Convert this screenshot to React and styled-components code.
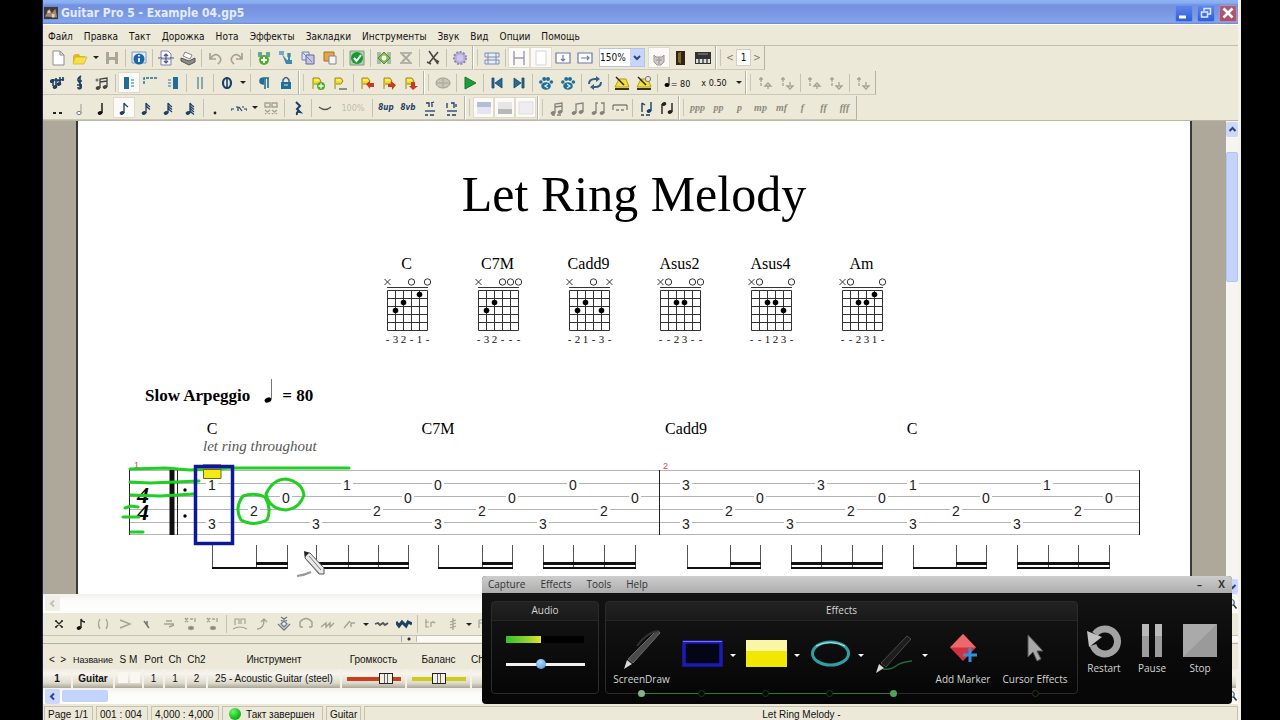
import React from 'react';
import styled, { createGlobalStyle, css } from 'styled-components';

const UI_FONT = '"DejaVu Sans Condensed", "DejaVu Sans", sans-serif';
const SANS = '"Liberation Sans", Arial, sans-serif';
const SERIF = '"Liberation Serif", "Times New Roman", serif';

const GlobalStyle = createGlobalStyle`
  * { box-sizing: border-box; }
  body { margin: 0; background: #000; }
  button, input, select { font: inherit; color: inherit; margin: 0; padding: 0; border: 0; background: none; }
`;

/* ---------- window ---------- */

const Screen = styled.div`
  height: 100vh;
  min-height: 600px;
  padding: 0 39px 0 42px;
  background: #000;
  font-family: ${UI_FONT};
  font-size: 10px;
  color: #111;
`;

const Window = styled.div`
  position: relative;
  display: flex;
  flex-direction: column;
  height: 100%;
  overflow: hidden;
  background: #ece9d8;
  border-left: 1px solid #1c2a55;
  border-right: 3px solid #f4f2ea;
`;

const TitleBar = styled.header`
  flex: none;
  display: flex;
  align-items: center;
  gap: 3px;
  height: 24px;
  padding: 2px 0 0 1px;
  background: linear-gradient(#8db4f3 0, #88adf0 3px, #7490de 5px, #7a98e4 14px, #84a6ee 22px, #6a87cc 24px);
  color: #e4ecfd;
`;

const TitleText = styled.h1`
  flex: 1;
  margin: 0;
  font-size: 12px;
  line-height: 18px;
  font-weight: 700;
`;

const CaptionButton = styled.button`
  display: grid;
  place-items: center;
  width: 18px;
  height: 17px;
  margin-right: 1px;
  border-radius: 2px;
  border: 1px solid ${p => (p.$close ? '#b98fae' : '#6d93ea')};
  background: ${p => (p.$close ? 'linear-gradient(#a85c7c, #b04f63)' : 'linear-gradient(#5c86ec, #2f5fd6)')};
`;

const MenuBar = styled.nav`
  flex: none;
  display: flex;
  align-items: center;
  gap: 11px;
  height: 22px;
  padding: 2px 5px 0;
  border-top: 1px solid #fff;
  border-bottom: 1px solid #c2bfae;
`;

const MenuItem = styled.button`
  white-space: nowrap;
`;

/* ---------- toolbars ---------- */

const Toolbars = styled.div`
  flex: none;
  display: flex;
  flex-direction: column;
  gap: 1px;
  border-bottom: 1px solid #b9b6a6;
`;

const ToolRow = styled.div`
  display: flex;
  height: 24px;
  overflow: hidden;
`;

const ToolGroup = styled.div`
  display: flex;
  align-items: center;
  padding: 0 1px 0 4px;
  border-right: 1px solid #b5b2a2;
  border-bottom: 1px solid #cbc8b8;

  & + & {
    padding-left: 7px;
    border-left: 1px solid #fff;
    background: linear-gradient(#c9c6b6, #c9c6b6) 3px 3px / 1px 17px no-repeat;
  }

  ${p => p.$tight && css`
    button { width: 21px; }
  `}
`;

const ToolButton = styled.button`
  display: grid;
  place-items: center;
  flex: none;
  width: ${p => p.$width || 22}px;
  height: 21px;
  white-space: nowrap;
  ${p => p.$on && css`
    background: #fbfaf6;
    border: 1px solid #dedbcd;
  `}
  ${p => p.$dim && css`
    opacity: 0.55;
    filter: grayscale(1);
  `}
`;

const Separator = styled.span`
  flex: none;
  width: 1px;
  height: 18px;
  margin: 0 2px;
  background: #c4c1b0;
`;

const Caret = styled.span`
  flex: none;
  width: 0;
  margin: 0 ${p => p.$gap || 2}px;
  border: solid transparent;
  border-width: 3px 3px 0;
  border-top-color: ${p => p.$color || '#222'};
`;

const ZoomBox = styled.label`
  display: flex;
  align-items: center;
  height: 19px;
  margin: 0 3px;
  background: #fff;
  border: 1px solid #b7c5dc;
`;

const ZoomSelect = styled.select`
  width: 30px;
  appearance: none;
  font-size: 10px;
`;

const ZoomArrow = styled.span`
  display: grid;
  place-items: center;
  width: 14px;
  height: 17px;
  background: #c5d5fb;
`;

const PageInput = styled.input`
  width: 15px;
  height: 17px;
  background: #fff;
  border: 1px solid #d2cfc0;
  text-align: center;
`;

const Dynamic = styled.i`
  font-family: ${SERIF};
  font-size: 10px;
  font-weight: 700;
  color: #8d8b80;
`;

const Tiny = styled.span`
  font-size: ${p => p.$size || 8}px;
  font-style: ${p => (p.$italic ? 'italic' : 'normal')};
  font-weight: ${p => (p.$bold ? 700 : 400)};
  color: ${p => p.$color || '#111'};
`;

const NAVY = '#1d3f63';
const TEAL = '#1f6f98';
const GREY = '#a5a294';

const noteHead = (x, y, c = '#111') => <ellipse cx={x} cy={y} rx="2.4" ry="1.8" fill={c} transform={`rotate(-20 ${x} ${y})`} />;
const flagged = n => (
  <>
    {noteHead(6, 13, NAVY)}
    <path d={`M8 13V3${Array.from({ length: n }, (_, i) => `M8 ${3 + i * 2.5}q1 2 4 4`).join('')}`} stroke={NAVY} strokeWidth="1.3" fill="none" />
  </>
);
const flag = (
  <>
    <path d="M3 14V3h6l2 3-2 3H4" fill="#f2dc32" stroke="#9c8a16" />
    <path d="M4 5h5" stroke="#fff7a8" />
  </>
);
const stacked = up => (
  <g fill="none" stroke={GREY} strokeWidth="1.3">
    <path d="M4 2v5M2 4h4M4 8v3" />
    <path d={up ? 'M11 14v-3M8 11l3-3 3 3z' : 'M11 7v3M8 11l3 3 3-3z'} />
  </g>
);
const beamed = (c, beams = 1) => (
  <>
    {noteHead(4, 13, c)}
    {noteHead(11, 12, c)}
    <path d={`M6 13V4l7-1v9${beams > 1 ? 'M6 7l7-1' : ''}`} stroke={c} strokeWidth="1.3" fill="none" />
  </>
);
const foot = c => <path d="M3 15h3M8 15h4" stroke={c} strokeWidth="1.5" />;
const paw = toe => (
  <g fill={TEAL}>
    <ellipse cx="8" cy="11" rx="4.8" ry="3.8" />
    <circle cx="2.8" cy="7" r="1.8" />
    <circle cx="6.2" cy="4" r="2" />
    <circle cx="10" cy="4" r="2" />
    <circle cx="13.4" cy="7" r="1.8" />
    <path d={toe} stroke="#e4eef4" strokeWidth="1.3" fill="none" />
  </g>
);
const metronome = (
  <>
    <path d="M1 13h14v2H1z" fill="#3a3410" />
    <path d="M5 4L1 12h14l-3-8z" fill="#f3de3a" stroke="#b09c1c" />
    <path d="M2 2l8 8" stroke="#222" strokeWidth="1.5" />
  </>
);

const ICONS = {
  logo: <><path d="M0 1h16v14H0z" fill="#3d3a3c" /><path d="M1 12L6 3l3 5 4-5 2 10z" fill="#a08a70" /><path d="M4 5h3v3H4zM9 9h3v4H9z" fill="#e2d3b8" /></>,
  'new': <path d="M3 1h7l4 4v10H3zM10 1v4h4" fill="#fff" stroke="#8c8c94" />,
  open: <><path d="M1 6l2-2h4l1 2h5v7H1z" fill="#e0bb22" /><path d="M3 7h12l-3 7H1z" fill="#f7e04e" stroke="#cbaa1c" strokeWidth=".6" /></>,
  save: <><path d="M2 2h12v12H2z" fill="#a9a699" /><path d="M5 2h6v5H5zM5 10h6v4H5z" fill="#ece9d8" /></>,
  info: <><path d="M1 2h14v11H1z" fill="#e7eef8" stroke="#7d99bd" /><circle cx="8" cy="9" r="5.5" fill="#1766ae" /><path d="M8 5v1.5M8 8v4" stroke="#fff" strokeWidth="1.8" /></>,
  setup: <><path d="M3 1h7l3 3v4H3zM3 9h10v6H3z" fill="#f8f8ff" stroke="#7c81a8" /><path d="M0 8h4M12 8h4M8 4v8M6 6l2-2 2 2M6 11l2 2 2-2" stroke="#4d5590" fill="none" strokeWidth="1.2" /></>,
  print: <><path d="M5 2l7 3-2 4-7-3z" fill="#fff" stroke="#888" /><path d="M1 8l8 3 6-3v4l-6 3-8-4z" fill="#8b8b8b" stroke="#555" /></>,
  undo: <path d="M3 3v6h6M3 9q5-7 9-3t-1 8" fill="none" stroke={GREY} strokeWidth="1.7" />,
  redo: <path d="M13 3v6H7M13 9Q8 2 4 6t1 8" fill="none" stroke={GREY} strokeWidth="1.7" />,
  addTrack: <><path d="M2 2h4v5H2zM10 2h4v5h-4z" fill="#6fa39a" /><circle cx="8" cy="10" r="5" fill="#4fae2c" /><path d="M8 7v6M5 10h6" stroke="#fff" strokeWidth="2" /></>,
  tracks: <><path d="M1 1h5v4H1zM9 3h4v4H9z" fill="#74a9bf" /><path d="M4 4l5 6h5v4H8z" fill="#3f87ad" /><path d="M11 3v7" stroke="#3f87ad" strokeWidth="2" /></>,
  trackProps: <><path d="M2 2h7v8H2z" fill="#d9e1f5" stroke="#6c82b2" /><path d="M6 5h8v9H6z" fill="#c6c4e4" stroke="#67659a" /><path d="M3 3l9 9" stroke="#7580b0" /></>,
  pasteTrack: <><path d="M2 2h10v9H2z" fill="#e2a64c" stroke="#a66f21" /><path d="M7 6h7v8H7z" fill="#f3f3f8" stroke="#888" /></>,
  check: <><path d="M1 1h14v14H1z" fill="#b8cdb6" stroke="#7d9a88" /><circle cx="8" cy="8" r="6" fill="#189a32" /><path d="M5 8l2.5 3L12 5" stroke="#fff" strokeWidth="2" fill="none" /></>,
  addBar: <><path d="M1 2h4v12H1zM11 2h4v12h-4z" fill="#a7b8b0" /><path d="M8 2l6 6-6 6-6-6z" fill="#8cbf4a" stroke="#4f8730" /><circle cx="8" cy="8" r="2.4" fill="#fff" /></>,
  delBar: <><path d="M2 3h12M2 13h12" stroke="#8a897f" strokeWidth="2" /><path d="M4 4l8 8M12 4l-8 8" stroke="#77766c" strokeWidth="2" /></>,
  tuner: <path d="M4 1l9 13M13 2L4 13M2 12l4 2M9 9l5 3" stroke="#4a4a42" strokeWidth="1.6" fill="none" />,
  gear: <><circle cx="8" cy="8" r="6" fill="#b9aed8" stroke="#8f86b5" strokeDasharray="2 1.4" strokeWidth="2" /><circle cx="8" cy="8" r="3.4" fill="#cdc6ea" /></>,
  multitrack: <path d="M1 3h14v4H1zM1 10h14v4H1zM4 3v11M12 3v11" fill="#e9effa" stroke="#7b8eb2" />,
  pageMode: <path d="M3 1v14M13 1v14M3 8h10" stroke="#9a9ab0" fill="none" strokeWidth="1.4" />,
  parchment: <path d="M3 1h10v14H3z" fill="#fff" stroke="#d4d4dd" />,
  screenV: <path d="M1 3h14v10H1zM8 5v6M6 9l2 2 2-2" fill="#fff" stroke="#6c78a8" strokeWidth="1.2" />,
  screenH: <path d="M1 3h14v10H1zM4 8h8M10 6l2 2-2 2" fill="#fff" stroke="#6c78a8" strokeWidth="1.2" />,
  fretboard: <path d="M3 5l2 2h6l2-2v7l-3 3H6l-3-3zM5 10h6M8 7v7" fill="#cfc9ca" stroke="#9d9496" />,
  guitar: <><path d="M3 1h9v14H3z" fill="#33240f" /><path d="M5 3l3-1v12l-3-2z" fill="#84672a" /></>,
  keys: <><path d="M0 2h16v12H0z" fill="#30332f" /><path d="M1 9h14v4H1z" fill="#dfe2dc" /><path d="M4 8v5M8 8v5M12 8v5" stroke="#30332f" strokeWidth="1.3" /><path d="M3 4h10" stroke="#8d958c" /></>,
  voices: <><path d="M3 4v7M6 3v8M3 5h6M10 2v7M7 6l7-2M13 2v4" stroke={NAVY} strokeWidth="1.6" fill="none" />{noteHead(2, 6, NAVY)}{noteHead(5, 12, NAVY)}{noteHead(9, 9, NAVY)}</>,
  clef: <path d="M9 1Q4 4 7 7t2 6q-3 2-3-1M8 2v12M6 6h4M5 10h5" stroke={NAVY} strokeWidth="1.6" fill="none" />,
  triplet: <>{beamed('#444', 2)}<circle cx="3" cy="5" r="1.5" fill="#777" /></>,
  barLeft: <><path d="M3 2h5v12H3z" fill={TEAL} /><path d="M10 5h3M10 8h3M10 11h3" stroke="#6aa3bf" strokeWidth="1.6" /></>,
  barTop: <path d="M1 9V3h14" stroke={TEAL} strokeWidth="1.4" strokeDasharray="3 1" fill="none" />,
  barRight: <><path d="M8 2h5v12H8z" fill={TEAL} /><path d="M3 5h3M3 8h3M3 11h3" stroke="#6aa3bf" strokeWidth="1.6" /></>,
  doubleBar: <path d="M6 2v12M10 2v12" stroke="#85a8a8" strokeWidth="2" />,
  coda: <><ellipse cx="8" cy="8" rx="4" ry="5" fill="#e8eef2" stroke={NAVY} strokeWidth="2.2" /><path d="M8 2v12" stroke={NAVY} strokeWidth="1.6" /></>,
  pilcrow: <path d="M7 3h6M9 3v11M12 3v10M8 3q-4 0-4 3t4 3" stroke={TEAL} strokeWidth="1.6" fill={TEAL} />,
  lock: <><path d="M5 7V5q3-5 6 0v2" stroke="#3a6488" fill="none" strokeWidth="1.5" /><path d="M3 7h10v7H3z" fill={TEAL} /><path d="M6 10h4" stroke="#d5e8f2" /></>,
  marker: <>{flag}<circle cx="11" cy="11" r="4" fill="#4faa2e" /><path d="M11 8.5v5M8.5 11h5" stroke="#fff" strokeWidth="1.3" /></>,
  markerList: <>{flag}<path d="M7 14h8" stroke="#777" strokeWidth="1.6" /></>,
  markerFirst: <>{flag}<path d="M7 9l4-3v2h4v4h-4v2z" fill="#c93a22" /></>,
  markerPrev: <>{flag}<path d="M7 9h3V6l5 4-4 5v-3H7z" fill="#c93a22" /></>,
  markerNext: <>{flag}<path d="M8 7h4v4h3l-5 4-4-4h2z" fill="#c93a22" /></>,
  rse: <><ellipse cx="8" cy="8" rx="7" ry="5" fill="#c9c6b9" stroke="#9e9b8e" /><path d="M2 8h12M8 4v8" stroke="#a9a699" /></>,
  play: <path d="M3 2l11 6-11 6z" fill="#1f9a3a" stroke="#157a2a" />,
  first: <path d="M3 3h2v10H3zM13 3v10L6 8z" fill={TEAL} stroke={NAVY} strokeWidth=".8" />,
  last: <path d="M11 3h2v10h-2zM3 3v10l7-5z" fill={TEAL} stroke={NAVY} strokeWidth=".8" />,
  paw: paw('M10 9l-3 2 3 2'),
  pawNext: paw('M7 9l3 2-3 2'),
  loop: <><path d="M2 9q0-5 6-5h2M14 7q0 5-6 5H6" fill="none" stroke="#345f86" strokeWidth="2" /><path d="M9 1l4 3-4 3zM7 9l-4 3 4 3z" fill="#345f86" /></>,
  metronome,
  metronomeCount: <>{metronome}<circle cx="12" cy="4" r="2.6" fill="#e6e6e6" stroke="#777" /></>,
  quarter: <>{noteHead(6, 13)}<path d="M8 13V3" stroke="#111" strokeWidth="1.4" /></>,
  whole: <path d="M3 12h3v2H3zM9 12h3v2H9z" fill="#222" />,
  half: <><ellipse cx="7" cy="13" rx="2.2" ry="1.6" fill="#fff" stroke="#777" /><path d="M9 13V4" stroke="#999" /></>,
  eighth: flagged(1),
  sixteenth: flagged(2),
  thirtysecond: flagged(3),
  sixtyfourth: flagged(4),
  dot: <circle cx="6" cy="13" r="1.4" fill="#222" />,
  tuplet: <><path d="M0 9h3M13 9h3M0 9v2M16 9v2" stroke={NAVY} /><path d="M5 7h2v4M8 7l3 4M11 7h2" stroke={NAVY} strokeWidth="1.2" fill="none" /></>,
  tupletFree: <path d="M2 3h5v4H2zM9 3h5v4H9zM2 10l5 4M9 10l5 4M7 10l-5 4M14 10l-5 4" stroke={GREY} strokeWidth="1.4" fill="none" />,
  rest: <path d="M6 2l4 4-3 3 3 3q-4-1-3 3" stroke={NAVY} strokeWidth="2" fill="none" />,
  tie: <path d="M2 7q6 5 12 0" stroke="#555" strokeWidth="1.3" fill="none" />,
  trUp: <g stroke={NAVY} fill="none" strokeWidth="1.3"><path d="M4 3h3v4M10 2v5M9 3l3-1" />{foot(NAVY)}<path d="M3 11h10" /></g>,
  trDown: <g stroke={NAVY} fill="none" strokeWidth="1.3"><path d="M3 3v5M7 3h3v5M12 4v3" />{foot(NAVY)}<path d="M3 11h10" /></g>,
  voiceHigh: <><path d="M1 2h14v12H1z" fill="#e3e6f0" /><path d="M1 2h14v5H1z" fill="#b4bdd6" /></>,
  voiceLow: <><path d="M1 2h14v12H1z" fill="#e6e6e6" /><path d="M1 9h14v5H1z" fill="#b8b8b8" /></>,
  voiceBoth: <path d="M1 2h14v12H1z" fill="#eeedf0" stroke="#ddd" />,
  beamAuto: <>{beamed('#85837a', 2)}{foot('#85837a')}</>,
  beam: beamed('#85837a'),
  beamBreak: <>{noteHead(3, 13, '#85837a')}{noteHead(11, 13, '#85837a')}<path d="M5 13V3h2M13 13V3h-3" stroke="#85837a" strokeWidth="1.3" fill="none" /></>,
  beamRest: <path d="M1 5h14M1 5v5M15 5v5M4 10h3M9 10h3" stroke="#85837a" strokeWidth="1.4" fill="none" />,
  stemAuto: <>{noteHead(11, 11, NAVY)}<path d="M4 3v9M13 11V2M4 3l3 2" stroke={NAVY} strokeWidth="1.4" />{foot(NAVY)}</>,
  stem: <>{noteHead(11, 12, '#222')}{noteHead(5, 4, '#222')}<path d="M3 4v10M13 12V3" stroke="#222" strokeWidth="1.4" /></>,
  sharpUp: stacked(true),
  flatDown: stacked(false),
  dead: <path d="M5 5l6 6M11 5l-6 6M4 5h2M10 5h2M4 11h2M10 11h2" stroke="#222" strokeWidth="1.4" />,
  grace: <>{noteHead(6, 12)}<path d="M8 12V3q1 3 4 3" stroke="#222" strokeWidth="1.4" fill="none" /></>,
  ghost: <path d="M5 3Q2 8 5 13M11 3q3 5 0 10" stroke={GREY} strokeWidth="1.3" fill="none" />,
  accent: <path d="M3 4l10 4-10 4" stroke={GREY} strokeWidth="1.4" fill="none" />,
  staccato: <path d="M5 5l5 7M8 5v4" stroke="#777" strokeWidth="1.6" />,
  ringing: <path d="M3 8h10M5 5h6M8 11l5-2" stroke={GREY} strokeWidth="1.4" />,
  tremBar: <g stroke={GREY} strokeWidth="1.3" fill="none"><path d="M2 2l3 4M5 2L2 6M7 3h3M12 2v4" /><ellipse cx="8" cy="12" rx="2.5" ry="1.5" fill="#777" /></g>,
  pm: <path d="M3 9V3h4v5M9 8V3h4v5M1 13q7-4 14 0" stroke={GREY} strokeWidth="1.2" fill="none" />,
  bend: <path d="M3 13q7 0 7-9M7 6l3-3 3 3" stroke={GREY} strokeWidth="1.4" fill="none" />,
  harmonic: <path d="M2 8l6 6 6-6M5 8l3-3 3 3-3 3zM5 1l6 4M11 1L5 5" stroke="#6b7785" strokeWidth="1.3" fill="#f7f7f7" />,
  hammer: <path d="M2 11V6q6-7 12 0v5M2 11h3M11 11h3" stroke={GREY} strokeWidth="1.4" fill="none" />,
  slide: <path d="M1 11l5-4v4l4-4v4l4-4" stroke={GREY} strokeWidth="1.4" fill="none" />,
  shift: <path d="M2 12l6-7M9 11V7h4" stroke={GREY} strokeWidth="1.4" fill="none" />,
  vibrato: <path d="M1 8l3-1 2 2 3-2 2 2 3-2" stroke="#555" strokeWidth="1.8" fill="none" />,
  vibratoWide: <path d="M0 6l3 4 3-4 4 4 2-4 4 2" stroke={NAVY} strokeWidth="3" fill="none" />,
  trill: <path d="M3 3v8h3M2 6h4M8 6v5M8 7q2-2 4 0" stroke={GREY} strokeWidth="1.2" fill="none" />,
  tremolo: <path d="M8 2v12M5 6l6-2M5 9l6-2M5 12l6-2" stroke={GREY} strokeWidth="1.3" />,
  tail: <path d="M2 4v8M2 4h4v3H2M9 4h4l-3 3 3 2-4 3" stroke={GREY} strokeWidth="1.2" fill="none" />,
  search: <><circle cx="7" cy="6" r="4" fill="#e8f0f4" stroke="#56707c" strokeWidth="1.6" /><path d="M10 9l4 5" stroke="#333" strokeWidth="2" /></>,
};

const Icon = ({ name, size = 16 }) => (
  <svg width={size} height={size} viewBox="0 0 16 16" fill="none" aria-hidden="true">
    {ICONS[name]}
  </svg>
);

// prefix "*" = pressed, "~" = disabled, "|" = separator, "v" = drop-down arrow
const renderTool = (item, i) => {
  if (typeof item !== 'string') return React.cloneElement(item, { key: i });
  if (item === '|') return <Separator key={i} />;
  if (item === 'v') return <Caret key={i} />;
  const name = item.replace(/^[*~]/, '');
  return (
    <ToolButton key={i} aria-label={name} $on={item[0] === '*'} $dim={item[0] === '~'}>
      <Icon name={name} />
    </ToolButton>
  );
};

const dynamics = ['ppp', 'pp', 'p', 'mp', 'mf', 'f', 'ff', 'fff'].map(d => (
  <ToolButton><Dynamic>{d}</Dynamic></ToolButton>
));

const TOOL_ROWS = [
  [
    ['new', 'open', 'v', 'save', '|', 'info', '|', 'setup', 'print', '|', 'undo', 'redo', '|',
      'addTrack', 'tracks', 'trackProps', 'pasteTrack', '|', 'check', '|', 'addBar', '~delBar', '|', 'tuner', '|', 'gear'],
    ['multitrack', '|', '*pageMode', '*parchment', 'screenV', 'screenH',
      <ZoomBox>
        <ZoomSelect aria-label="Zoom" defaultValue="150%"><option>150%</option></ZoomSelect>
        <ZoomArrow>
          <svg width="8" height="6" viewBox="0 0 8 6"><path d="M1 1l3 3 3-3" fill="none" stroke="#2c4680" strokeWidth="2" /></svg>
        </ZoomArrow>
      </ZoomBox>,
      '*fretboard', 'guitar', 'keys'],
    [
      <ToolButton $width={12} $dim>&lt;</ToolButton>,
      <PageInput aria-label="Page" defaultValue="1" />,
      <ToolButton $width={12} $dim>&gt;</ToolButton>,
    ],
  ],
  [
    ['voices', 'clef', 'triplet', '|', '*barLeft', 'barTop', 'barRight', '|', 'doubleBar', '|', 'coda', 'v', '|', 'pilcrow', 'lock'],
    ['marker', 'markerList', '|', 'markerFirst', 'markerPrev', 'markerNext'],
    ['rse', '|', 'play', '|', 'first', 'last', '|', 'paw', 'pawNext', '|', 'loop', '|', 'metronome', 'metronomeCount', '|',
      <ToolButton $width={34}>
        <span>
          <svg width="7" height="10" viewBox="0 0 7 10"><ellipse cx="3" cy="8" rx="2.500" ry="2" /><path d="M5 8V0" stroke="#111" /></svg>
          <Tiny $size={9}>= 80</Tiny>
        </span>
      </ToolButton>,
      <ToolButton $width={40}><Tiny $size={9}>x 0.50</Tiny></ToolButton>,
      'v'],
    ['sharpUp', 'flatDown', '|', 'sharpUp', 'flatDown', '|', 'flatDown'],
  ],
  [
    ['whole', 'half', 'quarter', '*eighth', 'sixteenth', 'thirtysecond', 'sixtyfourth', '|', 'dot', 'tuplet', 'v', 'tupletFree', '|',
      'rest', '|', 'tie',
      <ToolButton $width={34}><Tiny $size={9} $color="#c0bdae">100%</Tiny></ToolButton>,
      '|',
      <ToolButton><Tiny $italic $bold $color={NAVY}>8up</Tiny></ToolButton>,
      <ToolButton><Tiny $italic $bold $color={NAVY}>8vb</Tiny></ToolButton>,
      'trUp', 'trDown'],
    ['*voiceHigh', '*voiceLow', '*voiceBoth'],
    ['beamAuto', 'beam', 'beamBreak', 'beamRest', '|', 'stemAuto', 'stem'],
    dynamics,
  ],
];

const MENU = ['Файл', 'Правка', 'Такт', 'Дорожка', 'Нота', 'Эффекты', 'Закладки', 'Инструменты', 'Звук', 'Вид', 'Опции', 'Помощь'];

/* ---------- score ---------- */

const Workspace = styled.main`
  flex: 1;
  min-height: 0;
  display: flex;
`;

const Desk = styled.div`
  flex: 1;
  display: flex;
  padding: 0 34px 0 33px;
  overflow: hidden;
  background: #ada899;
`;

const Sheet = styled.article`
  flex: 1;
  display: flex;
  flex-direction: column;
  padding-top: 44px;
  background: #fff;
  border: solid #3c3a36;
  border-width: 0 2px;
  color: #000;
  font-family: ${SERIF};

  > * { flex-shrink: 0; }
`;

const SongTitle = styled.h2`
  margin: 0 0 32px;
  font-size: 50px;
  line-height: 58px;
  font-weight: 400;
  text-align: center;
`;

const ChordRow = styled.div`
  display: flex;
  justify-content: center;
`;

const Chord = styled.figure`
  width: 91px;
  margin: 0;
  display: flex;
  flex-direction: column;
  align-items: center;
`;

const ChordName = styled.figcaption`
  font-size: 16px;
  line-height: 18px;
`;

const Tempo = styled.div`
  display: flex;
  align-items: center;
  height: 25px;
  margin: 33px 0 0 67px;
  font-size: 17px;
  line-height: 25px;
  font-weight: 700;
`;

const TempoNote = styled.svg`
  margin: 0 8px 9px 14px;
`;

const Staff = styled.svg`
  display: block;
  width: 100%;
`;

const CHORDS = [
  { name: 'C', marks: 'x  o o', fingers: '-32-1-', dots: [[1, 3], [2, 2], [4, 1]] },
  { name: 'C7M', marks: 'x  ooo', fingers: '-32---', dots: [[1, 3], [2, 2]] },
  { name: 'Cadd9', marks: 'x  o x', fingers: '-21-3-', dots: [[1, 3], [2, 2], [4, 3]] },
  { name: 'Asus2', marks: 'xo  oo', fingers: '--23--', dots: [[2, 2], [3, 2]] },
  { name: 'Asus4', marks: 'xo   o', fingers: '--123-', dots: [[2, 2], [3, 2], [4, 3]] },
  { name: 'Am', marks: 'xo   o', fingers: '--231-', dots: [[2, 2], [3, 2], [4, 1]] },
];

const ChordDiagram = ({ marks, fingers, dots }) => {
  const sx = i => 6.5 + i * 8;
  return (
    <svg width="51" height="77" viewBox="0 0 51 77">
      <path d="M6 14.5h41" stroke="#333" />
      {[0, 1, 2, 3, 4, 5].map(i => (
        <path key={i} d={`M${sx(i)} 17.5v40M6.5 ${17.5 + i * 8}h40`} stroke="#333" />
      ))}
      {[...marks].map((m, i) => (
        <React.Fragment key={i}>
          {m === 'x' && <path d={`M${sx(i) - 3} 6l6 6m0-6l-6 6`} stroke="#333" />}
          {m === 'o' && <circle cx={sx(i)} cy="9" r="3.2" fill="none" stroke="#333" />}
        </React.Fragment>
      ))}
      {dots.map(([s, f]) => <circle key={s} cx={sx(s)} cy={13.5 + f * 8} r="2.8" />)}
      {[...fingers].map((f, i) => (
        <text key={i} x={sx(i)} y="70" fontSize="11" textAnchor="middle" fill="#111">{f}</text>
      ))}
    </svg>
  );
};

const LINES = [469.5, 482.5, 495.5, 508.5, 521.5, 533.5];

// [x, line, fret]
const NOTES = [
  [212, 1, 1], [212, 4, 3], [254, 3, 2], [286, 2, 0], [316, 4, 3], [347, 1, 1], [377, 3, 2], [408, 2, 0],
  [438, 1, 0], [438, 4, 3], [482, 3, 2], [512, 2, 0], [543, 4, 3], [573, 1, 0], [604, 3, 2], [635, 2, 0],
  [686, 1, 3], [686, 4, 3], [729, 3, 2], [760, 2, 0], [790, 4, 3], [821, 1, 3], [851, 3, 2], [882, 2, 0],
  [913, 1, 1], [913, 4, 3], [956, 3, 2], [986, 2, 0], [1017, 4, 3], [1047, 1, 1], [1078, 3, 2], [1109, 2, 0],
];

// stems of one beam, then the index where the second beam starts
const BEAMS = [
  [[212, 256, 287], 1], [[316, 348, 378, 408], 0],
  [[438, 482, 512], 1], [[543, 573, 604, 635], 0],
  [[687, 730, 760], 1], [[791, 821, 852, 882], 0],
  [[913, 956, 986], 1], [[1017, 1048, 1078, 1109], 0],
];

const LABELS = [[212, 'C'], [438, 'C7M'], [686, 'Cadd9'], [912, 'C']];

const PEN_STROKES = [
  'M130 468L165 467L190 469L232 467L349 467',
  'M130 481L150 482L199 480',
  'M131 494L160 495L194 493',
  'M125 507l6-2 7 1',
  'M123 516h16',
  'M131 531h12',
  'M243 495Q254 491 265 496Q272 508 267 519Q253 526 241 519Q234 507 243 495',
  'M266 493Q273 478 286 478Q302 481 304 494Q299 508 286 509Q269 508 266 493',
];

const Tablature = () => (
  <Staff viewBox="78 407 1112 187" role="img" aria-label="Tablature">
    {LINES.map(y => <path key={y} d={`M129 ${y}H1140`} stroke="#b4b4b4" />)}
    <path d="M129.5 469v65M659.5 469v65M1139.5 469v65M177.5 469v65" stroke="#222" />
    <path d="M172 469v65" stroke="#111" strokeWidth="5" />
    <circle cx="185" cy="489" r="1.7" />
    <circle cx="185" cy="515" r="1.7" />
    <g fontFamily={SERIF} fontSize="24" fontWeight="700" fontStyle="italic" textAnchor="middle">
      <text x="143" y="502">4</text>
      <text x="143" y="519">4</text>
    </g>
    <g fontFamily={SERIF} fontSize="16" textAnchor="middle">
      {LABELS.map(([x, t]) => <text key={x} x={x} y="433">{t}</text>)}
    </g>
    <text x="203" y="450" fontFamily={SERIF} fontSize="15" fontStyle="italic" fill="#555">let ring throughout</text>
    <g fontFamily={SANS} fontSize="9" fill="#e0405a">
      <text x="134" y="467">1</text>
      <text x="663" y="468">2</text>
    </g>
    {NOTES.map(([x, line, fret]) => (
      <g key={`${x}-${line}`}>
        <rect x={x - 6} y={LINES[line] - 5} width="12" height="12" fill="#fff" />
        <text x={x} y={LINES[line] + 6} fontFamily={SANS} fontSize="14" textAnchor="middle" fill="#222">{fret}</text>
      </g>
    ))}
    {BEAMS.map(([stems, second]) => {
      const last = stems[stems.length - 1];
      return (
        <g key={stems[0]} stroke="#111">
          {stems.map(x => <path key={x} d={`M${x + 0.5} 544v23`} stroke="#555" />)}
          <path d={`M${stems[0]} 567H${last + 1}`} strokeWidth="2" />
          <path d={`M${stems[second]} 562.5H${last + 1}`} strokeWidth="3" />
        </g>
      );
    })}
    {PEN_STROKES.map(d => (
      <path key={d} d={d} fill="none" stroke="#1fcf22" strokeWidth="3" strokeLinecap="round" strokeLinejoin="round" />
    ))}
    <path d="M203 463h18v5h-18z" fill="#88889c" />
    <path d="M203.500 468.500h17.500v9h-17.500z" fill="#f3ea12" stroke="#6e6a1c" />
    <rect x="195.500" y="465.500" width="37" height="77" fill="none" stroke="#0c1896" strokeWidth="3.500" />
    <path d="M297 575q8-1 14-4" stroke="#999" strokeWidth="2" fill="none" />
    <path d="M305 551l5 1 14 15 0 6-5 0-14-16z" fill="#e9e9e9" stroke="#555" />
    <path d="M309 555l12 14M306 558l13 14" stroke="#777" />
    <path d="M304 550l5 2-4 4z" fill="#222" />
  </Staff>
);

const ScrollColumn = styled.div`
  flex: none;
  width: 12px;
  display: flex;
  flex-direction: column;
  justify-content: space-between;
  padding-top: 1px;
  background: #f6f5f2;
`;

const ScrollButton = styled.button`
  display: grid;
  place-items: center;
  width: ${p => (p.$wide ? 15 : 12)}px;
  height: 15px;
  border-radius: 2px;
  background: ${p => (p.$off ? '#f0efe8' : '#c9d8fb')};
  color: ${p => (p.$off ? '#c5c2b4' : '#2c4680')};
`;

const ScrollThumb = styled.div`
  height: 130px;
  margin: 15px 0 auto;
  border: 1px solid #b1c3f2;
  border-radius: 2px;
  background: #c3d3fb;
`;

const Chevron = ({ turn }) => (
  <svg width="9" height="9" viewBox="0 0 9 9" aria-hidden="true">
    <path d="M1.500 6l3-3 3 3" fill="none" stroke="currentColor" strokeWidth="2" transform={`rotate(${turn} 4.500 4.500)`} />
  </svg>
);

/* ---------- lower panes ---------- */

const ScrollRow = styled.div`
  flex: none;
  display: flex;
  align-items: center;
  justify-content: space-between;
  height: ${p => p.$height}px;
  padding-left: 2px;
  background: linear-gradient(#f3f1ec, #fdfdfb 40%);
`;

const HThumb = styled.div`
  width: 46px;
  height: 12px;
  margin: 0 auto 0 2px;
  border-radius: 2px;
  background: #c3d3fb;
`;

const EffectBar = styled.div`
  flex: none;
  display: flex;
  align-items: center;
  height: 22px;
  padding-left: 5px;
  overflow: hidden;
`;

const Splitter = styled.div`
  flex: none;
  height: 9px;
  padding-left: 358px;
  border-top: 1px solid #c5c2b2;
  border-bottom: 1px solid #b3b0a0;
`;

const SplitterGrip = styled.div`
  height: 6px;
  background: #fbfaf5;
  border-left: 1px solid #aaa;

  &::before {
    content: '';
    display: block;
    width: 14px;
    height: 6px;
    border-right: 1px solid #bbb;
    background: radial-gradient(circle at 7px 3px, #333 1px, #ece9d8 2px);
  }
`;

const TrackTable = styled.table`
  flex: none;
  width: 100%;
  table-layout: fixed;
  border-collapse: collapse;
  font-family: ${SANS};

  th {
    height: 25px;
    padding: 6px 0 0;
    font-weight: 400;
    white-space: nowrap;
  }

  th:nth-child(2) {
    font-size: 9px;
  }

  td {
    height: 19px;
    padding: 0;
    text-align: center;
    white-space: nowrap;
    overflow: hidden;
    border-right: 2px solid #f4f2e8;
    background: linear-gradient(#efede2 0, #f6f4ec 5px, #dedbcd 14px, #a9a698 19px);
  }
`;

const SoloMute = styled.span`
  display: inline-flex;
  gap: 2px;

  i {
    width: 10px;
    height: 11px;
    background: #f8f7f2;
  }
`;

const Level = styled.input`
  appearance: none;
  display: block;
  width: 54px;
  height: 14px;
  margin: 0 auto;

  &::-webkit-slider-runnable-track {
    height: 4px;
    background: ${p => p.$color};
  }

  &::-webkit-slider-thumb {
    appearance: none;
    width: 14px;
    height: 11px;
    margin-top: -4px;
    border: 1px solid #222;
    background: linear-gradient(90deg, #f3efe2 4px, #666 4px 5px, #f3efe2 5px 7px, #666 7px 8px, #f3efe2 8px);
  }
`;

const StatusBar = styled.footer`
  flex: none;
  display: flex;
  gap: 3px;
  height: 16px;
  padding: 2px 0 0 1px;
  overflow: hidden;
  font-family: ${SANS};
`;

const StatusCell = styled.span`
  flex: none;
  display: flex;
  align-items: center;
  gap: 5px;
  width: ${p => p.$width}px;
  padding: 1px 2px 0 3px;
  white-space: nowrap;
  border: solid #c4c1b1;
  border-width: 1px 1px 0;
`;

const StatusSong = styled(StatusCell)`
  flex: 1;
  justify-content: center;
`;

const Led = styled.i`
  width: 12px;
  height: 12px;
  margin-left: 3px;
  border-radius: 50%;
  background: radial-gradient(circle at 35% 30%, #6df56a, #14bd1c 60%, #0c8f14);
`;

const COLUMNS = [29, 42, 29, 21, 22, 21, 134, 65, 65];

/* ---------- recorder ---------- */

const Recorder = styled.section`
  position: absolute;
  right: 6px;
  bottom: 16px;
  width: 750px;
  border-radius: 4px;
  overflow: hidden;
  background: linear-gradient(#161616, #0a0a0a 60%, #060606);
  color: #d4d4d4;
  font-family: "Open Sans", ${SANS};
  font-size: 10px;
`;

const RecorderBar = styled.div`
  display: flex;
  align-items: center;
  gap: 15px;
  height: 17px;
  padding: 0 7px 2px 6px;
  background: linear-gradient(#cdcdcd, #adadad);
  color: #333;
`;

const RecorderCaption = styled.button`
  width: 7px;
  line-height: 14px;
  font-weight: 700;
  ${p => p.$first && 'margin-left: auto;'}
`;

const RecorderBody = styled.div`
  display: flex;
  gap: 6px;
  height: 111px;
  padding: 8px 4px 10px 9px;
`;

const Group = styled.div`
  position: relative;
  flex: none;
  width: ${p => p.$width}px;
  border: 1px solid #2b2b2b;
  border-radius: 4px;
  background: linear-gradient(#222, #1a1a1a 18px, #121212 19px, #060606);
`;

const GroupTitle = styled.h3`
  margin: 0;
  height: 19px;
  line-height: 17px;
  text-align: center;
  font-size: 10px;
  font-weight: 400;
  border-bottom: 1px solid #262626;
`;

const Meter = styled.div`
  height: 7px;
  margin: 15px 14px;
  background: linear-gradient(90deg, #2fc22a, #8bd12c 25%, #e9e22e 45%, #000 45%);
`;

const Volume = styled.input`
  appearance: none;
  display: block;
  width: 79px;
  height: 12px;
  margin: 0 0 0 14px;

  &::-webkit-slider-runnable-track {
    height: 3px;
    background: #f2f2f2;
  }

  &::-webkit-slider-thumb {
    appearance: none;
    width: 10px;
    height: 10px;
    margin-top: -4px;
    border-radius: 50%;
    background: radial-gradient(circle at 40% 30%, #b5dcfb, #4d8fd6);
  }
`;

const EFFECT_COLUMNS = '71px repeat(4, 64px) 60px 84px';

const EffectTools = styled.div`
  display: grid;
  grid-template-columns: ${EFFECT_COLUMNS};
  height: 72px;
`;

const EffectTool = styled.div`
  display: flex;
  flex-direction: column;
  align-items: center;
  padding-top: 7px;
`;

const EffectButton = styled.button`
  display: flex;
  flex-direction: column;
  align-items: center;
  white-space: nowrap;
  line-height: 14px;
`;

const SplitTool = styled.div`
  display: flex;
  align-items: center;
  justify-content: center;
  gap: 6px;
  height: 68px;
`;

const Timeline = styled.div`
  position: absolute;
  left: 0;
  right: 0;
  bottom: -4px;
  display: grid;
  grid-template-columns: ${EFFECT_COLUMNS};
  background: linear-gradient(#2f7a3a, #2f7a3a) 36px 3px / 252px 1px no-repeat;
`;

const Tick = styled.i`
  width: 7px;
  height: 7px;
  margin-left: ${p => p.$at}px;
  border-radius: 50%;
  border: 1px solid ${p => (p.$color ? 'transparent' : '#1b3a20')};
  background: ${p => p.$color || '#050505'};
`;

const Transport = styled.div`
  display: grid;
  grid-template-columns: repeat(3, 48px);
  flex: none;
  margin-left: -4px;
  padding-top: 21px;
`;

const TransportButton = styled.button`
  display: flex;
  flex-direction: column;
  align-items: center;
  line-height: 18px;
  height: 55px;
`;

const PenArt = ({ ink }) => (
  <svg width="42" height="44" viewBox="0 0 42 44" aria-hidden="true">
    {ink && <path d="M10 37q8 1 13-3t16-5" fill="none" stroke="#1f6a35" strokeWidth="1.500" />}
    <path d={ink ? 'M8 31L34 4l4 3L13 35z' : 'M7 31L34 4q4-2 5 1L12 35z'} fill={ink ? '#1d1d1d' : '#4a4a4a'} stroke={ink ? '#494949' : '#6a6a6a'} />
    {!ink && <path d="M16 18Q26 4 37 3" fill="none" stroke="#333" strokeWidth="2" />}
    <path d="M3 41l3-9 5 4z" fill="#d8d8d8" />
  </svg>
);

const RecorderPanel = () => (
  <Recorder aria-label="Recorder">
    <RecorderBar>
      {['Capture', 'Effects', 'Tools', 'Help'].map(t => <button key={t}>{t}</button>)}
      <RecorderCaption $first aria-label="Minimize">–</RecorderCaption>
      <RecorderCaption aria-label="Close">X</RecorderCaption>
    </RecorderBar>
    <RecorderBody>
      <Group $width={108}>
        <GroupTitle>Audio</GroupTitle>
        <Meter />
        <Volume type="range" aria-label="Volume" defaultValue="43" />
      </Group>
      <Group $width={473}>
        <GroupTitle>Effects</GroupTitle>
        <EffectTools>
          <EffectTool>
            <EffectButton><PenArt />ScreenDraw</EffectButton>
          </EffectTool>
          <SplitTool>
            <button aria-label="Rectangle">
              <svg width="41" height="27" viewBox="0 0 41 27"><path d="M2 2h37v23H2z" fill="#050518" stroke="#1d1bb8" strokeWidth="3.500" /><path d="M1 1.500h39" stroke="#7773e8" /></svg>
            </button>
            <Caret $gap={1} $color="#fff" />
          </SplitTool>
          <SplitTool>
            <button aria-label="Highlight">
              <svg width="41" height="27" viewBox="0 0 41 27"><path d="M0 0h41v27H0z" fill="#f1e700" /><path d="M0 0h41v11H0z" fill="#fbf6a6" /></svg>
            </button>
            <Caret $gap={1} $color="#fff" />
          </SplitTool>
          <SplitTool>
            <button aria-label="Ellipse">
              <svg width="41" height="27" viewBox="0 0 41 27"><ellipse cx="20.500" cy="13.500" rx="18" ry="11.500" fill="none" stroke="#2e9fa3" strokeWidth="3" /><path d="M6 6Q20-1 35 6" fill="none" stroke="#b6efee" /></svg>
            </button>
            <Caret $gap={1} $color="#fff" />
          </SplitTool>
          <SplitTool>
            <button aria-label="Freehand"><PenArt ink /></button>
            <Caret $gap={1} $color="#fff" />
          </SplitTool>
          <EffectTool>
            <EffectButton>
              <svg width="32" height="44" viewBox="0 0 32 44">
                <path d="M16 6l13 13.500L16 33 3 19.500z" fill="#d5313c" />
                <path d="M16 6l13 13.500H3z" fill="#ea6a6c" />
                <path d="M23 20v14M16 27h14" stroke="#2f8fe0" strokeWidth="3" />
              </svg>
              Add Marker
            </EffectButton>
          </EffectTool>
          <EffectTool>
            <EffectButton>
              <svg width="24" height="44" viewBox="0 0 24 44">
                <path d="M5 7v22l5-5 4 9 4-2-4-8h6z" fill="#a9a9a9" stroke="#555" />
              </svg>
              Cursor Effects
            </EffectButton>
          </EffectTool>
        </EffectTools>
        <Timeline>
          <Tick $at={32} $color="#7fb588" />
          <Tick $at={21} />
          <Tick $at={21} />
          <Tick $at={21} />
          <Tick $at={21} $color="#4fa35a" />
          <span />
          <Tick $at={39} />
        </Timeline>
      </Group>
      <Transport>
        <TransportButton>
          <svg width="36" height="37" viewBox="0 0 36 37">
            <path d="M9 12a12.500 12.500 0 1 1-2 11" fill="none" stroke="#a3a3a3" strokeWidth="7" />
            <path d="M1 9l15 6-13 10z" fill="#c2c2c2" />
          </svg>
          Restart
        </TransportButton>
        <TransportButton>
          <svg width="24" height="37" viewBox="0 0 24 37">
            <path d="M2 2h7v33H2zM15 2h7v33h-7z" fill="#9c9c9c" />
            <path d="M2 2h7v12H2zM15 2h7v12h-7z" fill="#b9b9b9" />
          </svg>
          Pause
        </TransportButton>
        <TransportButton>
          <svg width="36" height="37" viewBox="0 0 36 37">
            <path d="M1 2h34v33H1z" fill="#9a9a9a" />
            <path d="M1 2h34L1 35z" fill="#aaa" />
          </svg>
          Stop
        </TransportButton>
      </Transport>
    </RecorderBody>
  </Recorder>
);

const App = () => (
  <Screen>
    <GlobalStyle />
    <Window>
      <TitleBar>
        <Icon name="logo" size={14} />
        <TitleText>Guitar Pro 5 - Example 04.gp5</TitleText>
        <CaptionButton aria-label="Minimize">
          <svg width="12" height="12" viewBox="0 0 12 12"><path d="M1 10h7" stroke="#fff" strokeWidth="3" /></svg>
        </CaptionButton>
        <CaptionButton aria-label="Restore">
          <svg width="12" height="12" viewBox="0 0 12 12"><path d="M4 4V1.500h6.500V7H8M1.500 5h6v5h-6z" fill="none" stroke="#dfe8ff" strokeWidth="1.500" /></svg>
        </CaptionButton>
        <CaptionButton $close aria-label="Close">
          <svg width="12" height="12" viewBox="0 0 12 12"><path d="M1.500 1.500l9 9M10.500 1.500l-9 9" stroke="#fff" strokeWidth="2.500" /></svg>
        </CaptionButton>
      </TitleBar>
      <MenuBar>
        {MENU.map(m => <MenuItem key={m}>{m}</MenuItem>)}
      </MenuBar>
      <Toolbars>
        {TOOL_ROWS.map((row, r) => (
          <ToolRow key={r}>
            {row.map((group, g) => (
              <ToolGroup key={g} $tight={r === 2 && g > 0}>{group.map(renderTool)}</ToolGroup>
            ))}
          </ToolRow>
        ))}
      </Toolbars>

      <Workspace>
        <Desk>
          <Sheet>
            <SongTitle>Let Ring Melody</SongTitle>
            <ChordRow>
              {CHORDS.map(c => (
                <Chord key={c.name}>
                  <ChordName>{c.name}</ChordName>
                  <ChordDiagram {...c} />
                </Chord>
              ))}
            </ChordRow>
            <Tempo>
              Slow Arpeggio
              <TempoNote width="10" height="24" viewBox="0 0 10 24" aria-hidden="true">
                <ellipse cx="4" cy="21" rx="3.500" ry="2.500" transform="rotate(-20 4 21)" />
                <path d="M7.500 20V0" stroke="#777" />
              </TempoNote>
              = 80
            </Tempo>
            <Tablature />
          </Sheet>
        </Desk>
        <ScrollColumn>
          <ScrollButton aria-label="Scroll up"><Chevron turn={0} /></ScrollButton>
          <ScrollThumb />
          <ScrollButton aria-label="Scroll down"><Chevron turn={180} /></ScrollButton>
        </ScrollColumn>
      </Workspace>

      <ScrollRow $height={19}>
        <ScrollButton $wide $off aria-label="Scroll left"><Chevron turn={-90} /></ScrollButton>
        <Icon name="search" size={12} />
      </ScrollRow>
      <EffectBar>
        {['dead', 'grace', 'ghost', 'accent', 'staccato', 'ringing', 'tremBar', 'tremBar', '|',
          'pm', 'bend', 'harmonic', 'hammer', 'slide', 'shift', 'v', 'vibrato', 'vibratoWide', '|',
          'trill', 'tremolo', 'v', 'tail'].map(renderTool)}
      </EffectBar>
      <Splitter><SplitterGrip /></Splitter>
      <TrackTable>
        <colgroup>
          {COLUMNS.map((w, i) => <col key={i} style={{ width: w }} />)}
          <col />
        </colgroup>
        <thead>
          <tr>
            <th>&lt; &nbsp;&gt;</th>
            <th>Название</th>
            <th>S M</th>
            <th>Port</th>
            <th>Ch</th>
            <th>Ch2</th>
            <th>Инструмент</th>
            <th>Громкость</th>
            <th>Баланс</th>
            <th align="left">Chorus</th>
          </tr>
        </thead>
        <tbody>
          <tr>
            <td><b>1</b></td>
            <td><b>Guitar</b></td>
            <td><SoloMute><i /><i /></SoloMute></td>
            <td>1</td>
            <td>1</td>
            <td>2</td>
            <td>25 - Acoustic Guitar (steel)</td>
            <td><Level type="range" aria-label="Громкость" defaultValue="82" $color="#c5401f" /></td>
            <td><Level type="range" aria-label="Баланс" defaultValue="50" $color="#cfcb1e" /></td>
            <td />
          </tr>
        </tbody>
      </TrackTable>
      <ScrollRow $height={16}>
        <ScrollButton $wide aria-label="Scroll tracks left"><Chevron turn={-90} /></ScrollButton>
        <HThumb />
        <Icon name="search" size={12} />
      </ScrollRow>
      <StatusBar>
        <StatusCell $width={49}>Page 1/1</StatusCell>
        <StatusCell $width={52}>001 : 004</StatusCell>
        <StatusCell $width={68}>4,000 : 4,000</StatusCell>
        <StatusCell $width={101}><Led />Такт завершен</StatusCell>
        <StatusCell $width={35}>Guitar</StatusCell>
        <StatusSong>Let Ring Melody -</StatusSong>
      </StatusBar>
      <RecorderPanel />
    </Window>
  </Screen>
);

export default App;
